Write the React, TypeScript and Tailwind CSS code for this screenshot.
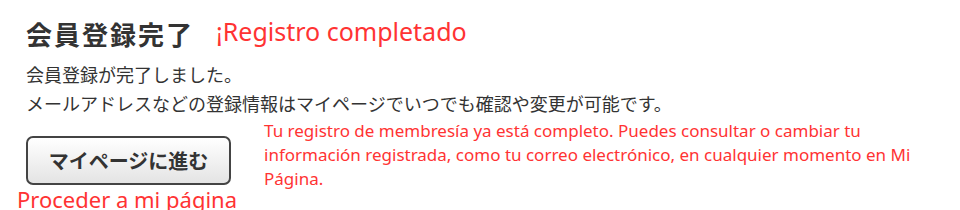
const jp = "font-['Noto_Sans_CJK_JP',sans-serif] text-[#333]";
const note = "font-['Noto_Sans',sans-serif] text-[#ff3333]";

export default function App() {
  return (
    <div className="h-[210px] w-[960px] overflow-hidden bg-white pl-[26px] pt-[14px]">
      {/* title + translation */}
      <div className="flex items-baseline gap-[22px]">
        <h1 className={`${jp} text-[26px] font-bold leading-[40px] tracking-[2px]`}>会員登録完了</h1>
        <p className={`${note} -translate-y-[4px] text-[25px] leading-[34px]`}>¡Registro completado</p>
      </div>

      <div className={`${jp} mt-[6px] text-[18px] leading-[29px]`}>
        <p>会員登録が完了しました。</p>
        <p>メールアドレスなどの登録情報はマイページでいつでも確認や変更が可能です。</p>
      </div>

      <div className="flex items-start">
        <div className="flex flex-col items-start pt-[18px]">
          <button
            className={`${jp} flex h-[49px] w-[205px] items-center justify-center rounded-[7px] border-2 border-[#444] bg-gradient-to-b from-white to-[#e4e4e4] text-[20px] font-bold`}
          >
            マイページに進む
          </button>
          <p className={`${note} -ml-[9px] text-[22px] leading-[28px]`}>Proceder a mi página</p>
        </div>
        <p className={`${note} ml-[27px] mt-[1px] w-[670px] text-[17px] leading-[24px]`}>
          Tu registro de membresía ya está completo. Puedes consultar o cambiar tu
          <br />
          información registrada, como tu correo electrónico, en cualquier momento en Mi
          <br />
          Página.
        </p>
      </div>
    </div>
  );
}
